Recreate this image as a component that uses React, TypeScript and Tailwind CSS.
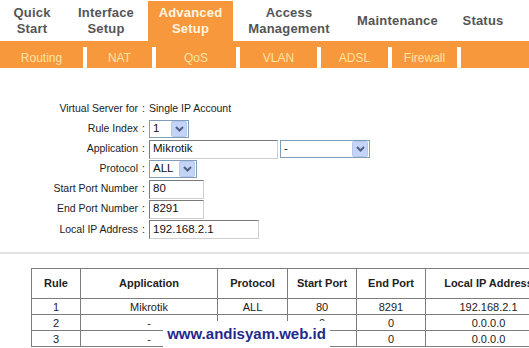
import React from "react";

const ORANGE = "bg-[#f8983c]";

function Chevron() {
  return (
    <svg width="9" height="6" viewBox="0 0 9 6">
      <polyline points="1,1 4.5,4.5 8,1" fill="none" stroke="#4d6185" strokeWidth="2" />
    </svg>
  );
}

function Select({ value, width }: { value: string; width: string }) {
  return (
    <div className={`${width} h-[18px] flex items-center border border-[#7f9db9] bg-white`}>
      <span className="flex-1 pl-[3px] text-[11.5px] text-[#111] leading-none">{value}</span>
      <span className="w-[16px] h-[16px] mr-px flex items-center justify-center rounded-[2px] bg-[#c4d3f8] border border-[#b5c6ef]">
        <Chevron />
      </span>
    </div>
  );
}

function Input({ value, width }: { value: string; width: string }) {
  return (
    <div
      className={`${width} h-[19px] flex items-center border border-t-[#7a7a7a] border-l-[#7a7a7a] border-r-[#cfcfcf] border-b-[#cfcfcf] bg-white pl-[3px] text-[11.5px] text-[#111]`}
    >
      {value}
    </div>
  );
}

function Row({ label, h = "h-[20px]", children }: { label: string; h?: string; children: React.ReactNode }) {
  return (
    <div className={`flex items-center ${h}`}>
      <span className="w-[138px] text-right text-[10.5px] text-[#222]">{label}</span>
      <span className="w-[11px] text-center text-[10.5px] text-[#222]">:</span>
      {children}
    </div>
  );
}

export default function App() {
  const tabs = [
    { w: "w-[64px]", t: ["Quick", "Start"] },
    { w: "w-[84px]", t: ["Interface", "Setup"] },
    { w: "w-[85px]", t: ["Advanced", "Setup"], active: true },
    { w: "w-[112px]", t: ["Access", "Management"] },
    { w: "w-[105px]", t: ["Maintenance"] },
    { w: "w-[66px]", t: ["Status"] },
  ];
  const subs = [
    { w: "w-[83px]", t: "Routing" },
    { w: "w-[65px]", t: "NAT" },
    { w: "w-[80px]", t: "QoS" },
    { w: "w-[77px]", t: "VLAN" },
    { w: "w-[67px]", t: "ADSL" },
    { w: "w-[65px]", t: "Firewall" },
  ];
  const rows = [
    ["1", "Mikrotik", "ALL", "80", "8291", "192.168.2.1"],
    ["2", "-", "", "0", "0", "0.0.0.0"],
    ["3", "-", "", "", "0", "0.0.0.0"],
  ];

  return (
    <div className="relative w-[529px] h-[348px] overflow-hidden bg-white font-['Liberation_Sans',Arial,sans-serif]">
      {/* Main tabs */}
      <nav className="flex h-[41px]">
        {tabs.map((tab) => (
          <div
            key={tab.t.join(" ")}
            className={`${tab.w} flex flex-col items-center justify-center text-center text-[13px] leading-[16px] font-bold tracking-[0.2px] ${
              tab.active ? `${ORANGE} mt-px text-[#fff6e2]` : "text-[#555]"
            }`}
          >
            {tab.t.map((line) => (
              <span key={line}>{line}</span>
            ))}
          </div>
        ))}
      </nav>

      {/* Sub menu */}
      <div className={`flex h-[27px] pt-[6px] ${ORANGE}`}>
        {subs.map((s) => (
          <React.Fragment key={s.t}>
            <div className={`${s.w} flex items-center justify-center text-[12px] text-[#fde3a6]`}>{s.t}</div>
            <div className="w-[4px] h-[21px] bg-white" />
          </React.Fragment>
        ))}
      </div>

      {/* Form */}
      <div className="mt-[30px] flex flex-col">
        <Row label="Virtual Server for" h="h-[21px]">
          <span className="text-[10.5px] text-[#222]">Single IP Account</span>
        </Row>
        <Row label="Rule Index">
          <Select value="1" width="w-[40px]" />
        </Row>
        <Row label="Application">
          <Input value="Mikrotik" width="w-[129px]" />
          <div className="ml-[2px]">
            <Select value="-" width="w-[90px]" />
          </div>
        </Row>
        <Row label="Protocol">
          <Select value="ALL" width="w-[48px]" />
        </Row>
        <Row label="Start Port Number">
          <Input value="80" width="w-[55px]" />
        </Row>
        <Row label="End Port Number">
          <Input value="8291" width="w-[55px]" />
        </Row>
        <Row label="Local IP Address" h="h-[21px]">
          <Input value="192.168.2.1" width="w-[110px]" />
        </Row>
      </div>

      <div className="mt-[12px] h-[2px] bg-[#e2e2e2]" />

      {/* Rule table */}
      <table className="mt-[14px] ml-[31px] border-collapse text-[11px] text-[#222] table-fixed w-[520px]">
        <colgroup>
          <col className="w-[49px]" />
          <col className="w-[137px]" />
          <col className="w-[70px]" />
          <col className="w-[69px]" />
          <col className="w-[69px]" />
          <col className="w-[126px]" />
        </colgroup>
        <thead>
          <tr className="h-[30px]">
            {["Rule", "Application", "Protocol", "Start Port", "End Port", "Local IP Address"].map((h) => (
              <th key={h} className="border border-[#7d7d7d] font-bold text-center whitespace-nowrap">
                {h}
              </th>
            ))}
          </tr>
        </thead>
        <tbody>
          {rows.map((r) => (
            <tr key={r[0]} className="h-[16px]">
              {r.map((c, i) => (
                <td key={i} className="border border-[#7d7d7d] text-center leading-[14px] p-0">
                  {c}
                </td>
              ))}
            </tr>
          ))}
        </tbody>
      </table>

      {/* Watermark */}
      <div className="absolute left-[163px] top-[321px] w-[167px] h-[27px] bg-white flex items-center justify-center text-[15px] font-bold text-[#1f2a8c]">
        www.andisyam.web.id
      </div>
    </div>
  );
}
